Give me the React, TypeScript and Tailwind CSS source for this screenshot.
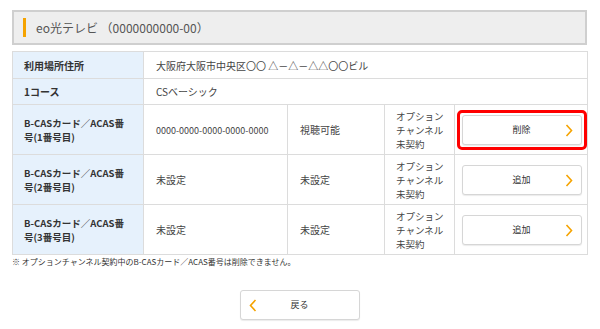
import React from 'react';

const font = { fontFamily: '"Noto Sans CJK JP", "Noto Sans", sans-serif' };

const Chevron = ({ left }: { left?: boolean }) => (
  <svg width="8" height="13" viewBox="0 0 8 13" fill="none" stroke="#f5a300" strokeWidth="1.6">
    {left ? <path d="M6.5 1 1.5 6.5l5 5.5" /> : <path d="M1.5 1l5 5.5-5 5.5" />}
  </svg>
);

function ActionButton({ label }: { label: string }) {
  return (
    <div className="relative flex h-[30px] w-[120px] items-center justify-center rounded-[3px] border border-[#d6d6d6] bg-white shadow-[0_1px_1px_rgba(0,0,0,0.08)]">
      <span className="text-[9px] text-[#333]">{label}</span>
      <span className="absolute right-[8px] top-[8px]">
        <Chevron />
      </span>
    </div>
  );
}

const labelCls = 'border border-[#dcdcdc] bg-[#e6f1fc] pl-[11px] pr-2 text-[10px] font-bold text-[#333]';
const cellCls = 'border border-[#dcdcdc] pl-[12px] text-[10px] text-[#444]';

function CasRow({ n, number, status, action, highlight }: { n: string; number: string; status: string; action: string; highlight?: boolean }) {
  return (
    <tr className="h-[50px]">
      <td className={labelCls}>
        <div className="text-[9.5px] leading-[14px]">B-CASカード／ACAS番</div>
        <div className="text-[9.5px] leading-[14px]">号({n}番号目)</div>
      </td>
      <td className={cellCls}>
        <span className={number.startsWith('0') ? 'text-[9px]' : ''}>{number}</span>
      </td>
      <td className={cellCls}>{status}</td>
      <td className="border border-[#dcdcdc] pl-[11px] text-[9.5px] leading-[14px] text-[#444]">
        <div>オプション</div>
        <div>チャンネル</div>
        <div>未契約</div>
      </td>
      <td className="border border-[#dcdcdc] p-0">
        <div className="flex justify-center pl-[1px]">
          {highlight ? (
            <div className="ml-[-6px] mr-[-6px] rounded-[5px] border-[3px] border-[#f00] p-[2px]">
              <ActionButton label={action} />
            </div>
          ) : (
            <ActionButton label={action} />
          )}
        </div>
      </td>
    </tr>
  );
}

export default function App() {
  return (
    <div className="h-[329px] w-[600px] bg-white pl-[12px] pr-[13px] pt-[10px]" style={font}>
      <div className="flex h-[35px] items-center border-2 border-[#cfcfcf] bg-[#eeeeee] pl-[9px]">
        <div className="h-[19px] w-[3px] bg-[#f5a300]" />
        <span className="ml-[10px] text-[12px] text-[#555]">eo光テレビ （0000000000-00）</span>
      </div>

      <table className="mt-[6px] w-[575px] table-fixed border-collapse">
        <colgroup>
          <col className="w-[131px]" />
          <col className="w-[144px]" />
          <col className="w-[97px]" />
          <col className="w-[70px]" />
          <col className="w-[133px]" />
        </colgroup>
        <tbody>
          <tr className="h-[27px]">
            <td className={labelCls}>利用場所住所</td>
            <td className={cellCls} colSpan={4}>大阪府大阪市中央区〇〇 △－△－△△〇〇ビル</td>
          </tr>
          <tr className="h-[26px]">
            <td className={labelCls}>1コース</td>
            <td className={cellCls} colSpan={4}>CSベーシック</td>
          </tr>
          <CasRow n="1" number="0000-0000-0000-0000-0000" status="視聴可能" action="削除" highlight />
          <CasRow n="2" number="未設定" status="未設定" action="追加" />
          <CasRow n="3" number="未設定" status="未設定" action="追加" />
        </tbody>
      </table>

      <p className="mt-[1px] text-[8px] text-[#333]">※ オプションチャンネル契約中のB-CASカード／ACAS番号は削除できません。</p>

      <div className="mt-[22px] flex justify-center">
        <div className="relative flex h-[30px] w-[120px] items-center justify-center rounded-[3px] border border-[#d6d6d6] bg-white shadow-[0_1px_1px_rgba(0,0,0,0.08)]">
          <span className="absolute left-[8px] top-[8px]">
            <Chevron left />
          </span>
          <span className="text-[9px] text-[#333]">戻る</span>
        </div>
      </div>
    </div>
  );
}
